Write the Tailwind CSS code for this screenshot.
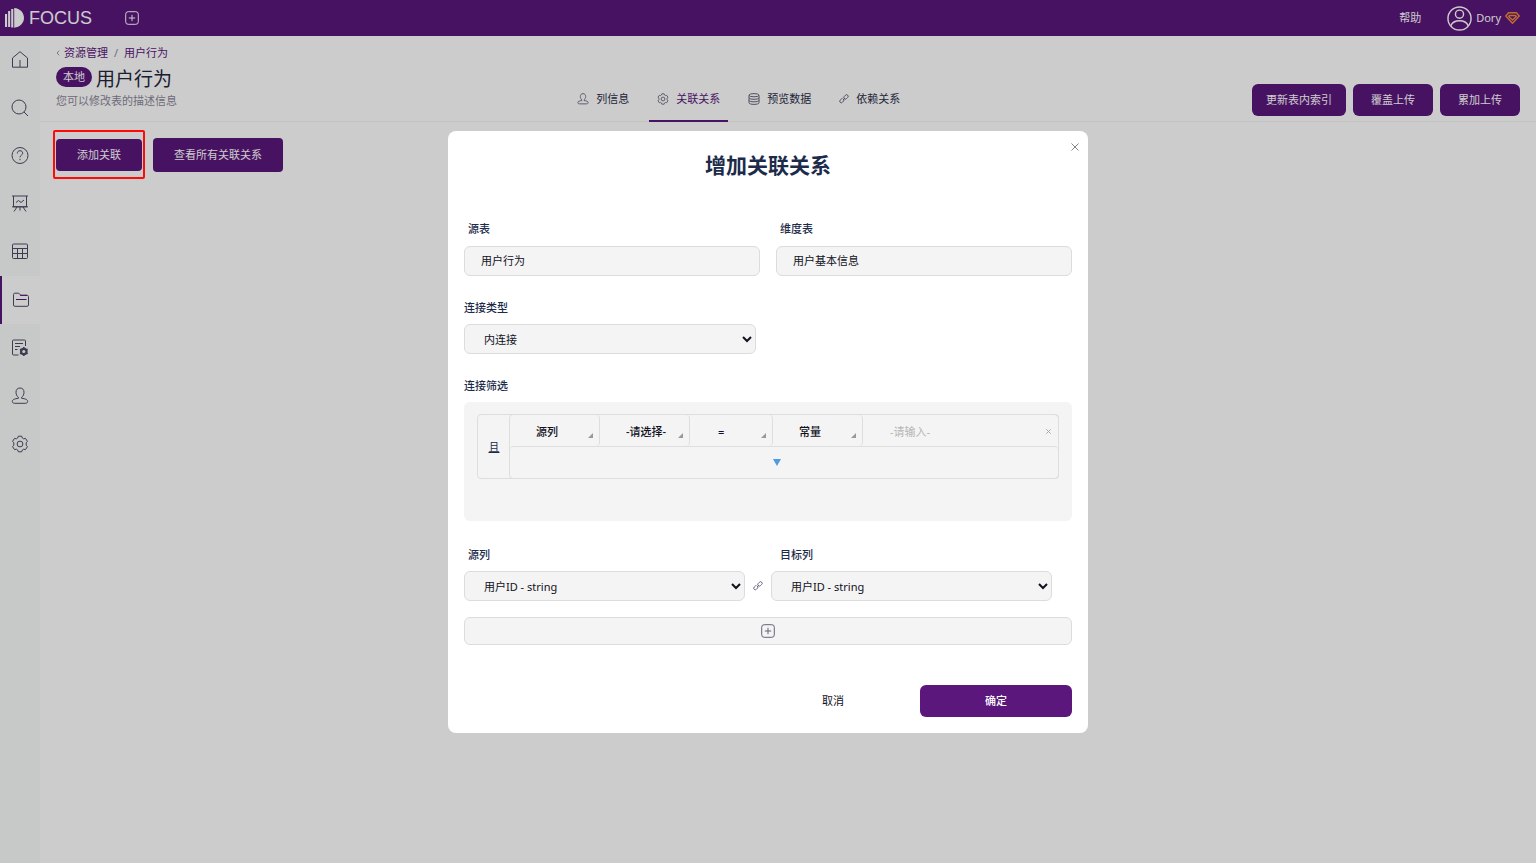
<!DOCTYPE html>
<html lang="zh-CN">
<head>
<meta charset="utf-8">
<meta name="viewport" content="width=device-width, initial-scale=1">
<title>FOCUS - 用户行为</title>
<script src="https://cdn.jsdelivr.net/npm/@tailwindcss/browser@4"></script>
</head>
<body class="flex min-h-screen flex-col bg-white font-['Noto_Sans','Noto_Sans_CJK_SC',sans-serif] text-[11px] leading-4 text-[#1c2b4a]">

<!-- shared icons -->
<svg class="hidden" aria-hidden="true">
  <symbol id="i-user" viewBox="0 0 18 18"><path d="M9 1c-2.500 0-4 1.700-4 4.200 0 2.300 1 4.300 2.400 5.100v1C3.500 11.700 1.300 12.700 1.300 14.500c0 1.200 1 1.800 2.400 1.800h10.600c1.400 0 2.400-.6 2.400-1.800 0-1.800-2.200-2.800-6.100-3.200v-1c1.400-.8 2.400-2.800 2.400-5.100 0-2.500-1.500-4.200-4-4.200z"/></symbol>
  <symbol id="i-gear" viewBox="0 0 18 18"><circle cx="9" cy="9" r="2.900"/><path d="M7.300 1.200h3.400l.6 1.800 1.300.8 1.900-.4 1.900 2.900-1.200 1.500v2.400l1.200 1.500-1.900 2.900-1.900-.4-1.300.8-.6 1.800H7.300L6.700 15l-1.300-.8-1.900.4-1.900-2.900 1.200-1.500V7.800L1.600 6.300l1.900-2.900 1.900.4L6.700 3z"/></symbol>
  <symbol id="i-link" viewBox="0 0 10 10"><path d="M4.900 4.200a1.500 1.500 0 0 1 .3-1.700L6.500 1.200a1.500 1.500 0 0 1 2.200 2.200L7.400 4.700a1.500 1.500 0 0 1-1.500.4M4.300 4.900a1.500 1.500 0 0 1 .4 2L3.400 8.300a1.500 1.500 0 0 1-2.200-2.200l1.300-1.300a1.500 1.500 0 0 1 .9-.4M4 6l2-2"/></symbol>
  <symbol id="i-plus" viewBox="0 0 14 14"><rect x=".7" y=".7" width="12.600" height="12.600" rx="2.500"/><path d="M7 3.800v6.400M3.800 7h6.400"/></symbol>
</svg>

<header class="flex h-9 items-center bg-[#5b177c] text-white">
  <a href="#" class="flex items-center gap-1 pl-[5px]">
    <svg class="h-5 w-5" viewBox="0 0 20 20" fill="currentColor" aria-hidden="true"><path d="M0 6h2.100v13H0zM3.100 3h2.100v16H3.100zM6.200 1h2.100v18.500H6.200zM9.200 0C15 .4 19 4.600 19 9.800s-4 9.500-9.800 9.900z"/></svg>
    <span class="font-['Liberation_Sans',sans-serif] text-lg">FOCUS</span>
  </a>
  <button aria-label="新建" class="ml-[33px]"><svg class="h-3.5 w-3.5" fill="none" stroke="currentColor"><use href="#i-plus"/></svg></button>
  <a href="#" class="ml-auto">帮助</a>
  <a href="#" class="mr-4 ml-[26px] flex items-center gap-1">
    <svg class="h-[25px] w-[25px]" viewBox="0 0 26 26" fill="none" stroke="currentColor" stroke-width="1.500" aria-hidden="true"><circle cx="13" cy="13" r="12"/><circle cx="13" cy="8.500" r="4.200"/><path d="M4 20.500c1.500-3.800 5-5.200 9-5.200s7.500 1.400 9 5.200"/></svg>
    Dory
    <svg class="h-3 w-[15px]" viewBox="0 0 15 12" fill="none" stroke="#f08a3c" stroke-width="1.400" stroke-linejoin="round" aria-hidden="true"><path d="M3.500.8h8L14.200 4 7.500 11.200.8 4z"/><path d="M4.500 3.500h6l.8 1L7.500 8 3.700 4.500z"/></svg>
  </a>
</header>

<div class="flex flex-1">
  <nav class="w-10 shrink-0 bg-[#f9fbfa] text-[#4c4c66]" aria-label="主导航">
    <a href="#" aria-label="首页" class="flex h-12 items-center justify-center"><svg class="h-[18px] w-[18px]" viewBox="0 0 18 18" fill="none" stroke="currentColor"><path d="M1.500 7 9 .7 16.500 7v9.200h-15zM9 9v7"/></svg></a>
    <a href="#" aria-label="搜索" class="flex h-12 items-center justify-center"><svg class="h-[18px] w-[18px]" viewBox="0 0 18 18" fill="none" stroke="currentColor"><circle cx="8" cy="8" r="7"/><path d="m13 13 4 4"/></svg></a>
    <a href="#" aria-label="帮助" class="flex h-12 items-center justify-center"><svg class="h-[18px] w-[18px]" viewBox="0 0 18 18" fill="none" stroke="currentColor"><circle cx="9" cy="8.500" r="8"/><path d="M6.300 6.500c0-1.700 1.100-2.800 2.700-2.800s2.700 1 2.700 2.500c0 1.900-2.700 2-2.700 4.100M9 11.800v1.400"/></svg></a>
    <a href="#" aria-label="看板" class="flex h-12 items-center justify-center"><svg class="h-[18px] w-[18px]" viewBox="0 0 18 18" fill="none" stroke="currentColor"><path d="M1 1h16M2.500 1v10.800h13V1M1 11.800h16M6 12l-3 4.500M12 12l3 4.500M9 12v3.500M5 7.500l2.500-2 2.500 2L13 5"/></svg></a>
    <a href="#" aria-label="表格" class="flex h-12 items-center justify-center"><svg class="h-[18px] w-[18px]" viewBox="0 0 18 18" fill="none" stroke="currentColor"><rect x="1.500" y="1" width="15" height="14.500" rx="1"/><path d="M1.500 5.500h15M1.500 10.500h15M6.500 5.500v10M11.500 5.500v10"/></svg></a>
    <a href="#" aria-label="资源管理" aria-current="page" class="flex h-12 items-center justify-center border-l-2 border-[#5b177c] bg-white"><svg class="h-[18px] w-[18px]" viewBox="0 0 18 18" fill="none" stroke="currentColor"><path d="M1.500 14V3.500c0-.8.5-1.300 1.300-1.300h4l2 2.100h6.400c.8 0 1.300.5 1.300 1.300V14c0 .8-.5 1.300-1.300 1.300H2.800c-.8 0-1.300-.5-1.300-1.300z"/><path d="M4 8.500h10.500M8 4.300h7" stroke="#5b177c"/></svg></a>
    <a href="#" aria-label="任务设置" class="flex h-12 items-center justify-center"><svg class="h-[18px] w-[18px]" viewBox="0 0 18 18" fill="none" stroke="currentColor"><path d="M14.500 7V2c0-.6-.4-1-1-1h-11c-.6 0-1 .4-1 1v13c0 .6.400 1 1 1h5M4 4.500h8M4 7.500h5M4 10.500h2.500"/><circle cx="12.800" cy="12.500" r="2.700" stroke-width="2.200"/><path d="M12.800 8.100v1.800M12.800 15.100v1.800M9 10.300l1.600.9M15 13.800l1.600.9M9 14.700l1.600-.9M15 11.200l1.600-.9" stroke-width="1.600"/></svg></a>
    <a href="#" aria-label="用户" class="flex h-12 items-center justify-center"><svg class="h-[18px] w-[18px]" fill="none" stroke="currentColor"><use href="#i-user"/></svg></a>
    <a href="#" aria-label="设置" class="flex h-12 items-center justify-center"><svg class="h-[18px] w-[18px]" fill="none" stroke="currentColor" stroke-linejoin="round"><use href="#i-gear"/></svg></a>
  </nav>

  <main class="min-w-0 flex-1">
    <div class="grid grid-cols-[26fr_auto_31fr] items-end border-b border-[#f3f3f3] px-4">
      <div class="pt-[9px] pb-3">
        <nav class="flex items-center text-[#5b177c]" aria-label="面包屑">
          <svg class="mr-1 h-1.5 w-1" viewBox="0 0 4 8" fill="none" stroke="#77778c" aria-hidden="true"><path d="M3.500 1 .8 4l2.700 3"/></svg>
          <a href="#">资源管理</a><span class="px-1.5 text-[#8a8a9a]">/</span><a href="#">用户行为</a>
        </nav>
        <div class="mt-1 flex h-7 items-center gap-1">
          <span class="mb-1 rounded-full bg-[#5b177c] px-[7px] py-0.5 text-white">本地</span>
          <h1 class="text-[19px] text-[#22263c]">用户行为</h1>
        </div>
        <p class="text-[#8b8798]">您可以修改表的描述信息</p>
      </div>
      <div class="-mb-px flex gap-3 text-[#2b2f4a]" role="tablist">
        <button role="tab" class="flex items-center gap-[7px] border-b-2 border-transparent px-2 pb-[13px]"><svg class="h-3 w-3 text-[#77778c]" fill="none" stroke="currentColor" stroke-width="1.500"><use href="#i-user"/></svg>列信息</button>
        <button role="tab" aria-selected="true" class="flex items-center gap-[7px] border-b-2 border-[#5b177c] px-2 pb-[13px] text-[#5b177c]"><svg class="h-3 w-3 text-[#77778c]" fill="none" stroke="currentColor" stroke-width="1.500" stroke-linejoin="round"><use href="#i-gear"/></svg>关联关系</button>
        <button role="tab" class="flex items-center gap-[7px] border-b-2 border-transparent px-2 pb-[13px]"><svg class="h-3 w-3 text-[#66667c]" viewBox="0 0 12 12" fill="none" stroke="currentColor"><ellipse cx="6" cy="2.200" rx="5" ry="1.600"/><path d="M1 2.200v7.600c0 .9 2.200 1.600 5 1.600s5-.7 5-1.600V2.200M1 4.800c0 .9 2.200 1.500 5 1.500s5-.6 5-1.500M1 7.300c0 .9 2.200 1.500 5 1.500s5-.6 5-1.500"/></svg>预览数据</button>
        <button role="tab" class="flex items-center gap-[7px] border-b-2 border-transparent px-2 pb-[13px]"><svg class="h-2.5 w-2.5 text-[#66667c]" fill="none" stroke="currentColor"><use href="#i-link"/></svg>依赖关系</button>
      </div>
      <div class="flex justify-end gap-[7px] pb-[5px] text-white">
        <button class="h-8 min-w-20 rounded-md bg-[#5b177c] px-3.5">更新表内索引</button>
        <button class="h-8 min-w-20 rounded-md bg-[#5b177c] px-3.5">覆盖上传</button>
        <button class="h-8 min-w-20 rounded-md bg-[#5b177c] px-3.5">累加上传</button>
      </div>
    </div>
    <div class="flex items-center gap-[11px] px-4 pt-4 text-white">
      <div class="relative">
        <button class="block h-8 rounded bg-[#5b177c] px-[21px]">添加关联</button>
        <span class="pointer-events-none absolute -inset-x-[3px] -top-[9px] -bottom-2 z-30 rounded-xs border-2 border-[#ff0a0a]"></span>
      </div>
      <button class="h-[34px] rounded bg-[#5b177c] px-[21px]">查看所有关联关系</button>
    </div>
  </main>
</div>

<div class="fixed inset-0 z-20 flex items-center justify-center bg-black/20 pt-px">
  <section role="dialog" aria-modal="true" aria-labelledby="dlg-title" class="relative w-full max-w-[640px] rounded-lg bg-white px-4 pt-5 pb-4">
    <button aria-label="关闭" class="absolute top-3 right-[9px] text-[#858585]"><svg class="h-2 w-2" viewBox="0 0 8 8" fill="none" stroke="currentColor"><path d="m.5.500 7 7M7.500.500l-7 7"/></svg></button>
    <h2 id="dlg-title" class="text-center text-[21px] leading-7 font-bold">增加关联关系</h2>

    <div class="mt-[42px] grid grid-cols-2 gap-4">
      <div>
        <label for="src-table" class="mb-[9px] block pl-1 font-medium">源表</label>
        <input id="src-table" value="用户行为" class="block h-[30px] w-full rounded-md border border-[#dcdcdc] bg-[#f4f4f4] px-4 pb-0.5 text-[#111122]">
      </div>
      <div>
        <label for="dim-table" class="mb-[9px] block pl-1 font-medium">维度表</label>
        <input id="dim-table" value="用户基本信息" class="block h-[30px] w-full rounded-md border border-[#dcdcdc] bg-[#f4f4f4] px-4 pb-0.5 text-[#111122]">
      </div>
    </div>

    <label for="join-type" class="mt-6 mb-2 block font-medium">连接类型</label>
    <select id="join-type" class="block h-[30px] w-[292px] rounded-md border border-[#dcdcdc] bg-[#f4f4f4] pl-[15px] text-[#111122]"><option>内连接</option></select>

    <h3 class="mt-6 mb-2 font-medium">连接筛选</h3>
    <div class="rounded-md bg-[#f4f4f4] p-3 pb-[42px]">
      <div class="mx-px flex rounded border border-[#dedede]">
        <button class="w-8 shrink-0 underline">且</button>
        <div class="-m-px min-w-0 flex-1 rounded border border-[#dedede]">
          <div class="flex h-[31px] text-[#111122]">
            <div class="relative w-[90px] shrink-0 rounded border-r border-[#dedede]">
              <select aria-label="列来源" class="h-full w-full appearance-none pt-0.5 pl-[26px] font-medium"><option>源列</option></select>
              <svg class="pointer-events-none absolute right-1.5 bottom-2 h-[5px] w-[5px]" viewBox="0 0 4 4" fill="#999"><path d="M4 0v4H0z"/></svg>
            </div>
            <div class="relative w-[90px] shrink-0 rounded border-r border-[#dedede]">
              <select aria-label="选择列" class="h-full w-full appearance-none pt-0.5 pl-[26px] font-medium"><option>-请选择-</option></select>
              <svg class="pointer-events-none absolute right-1.5 bottom-2 h-[5px] w-[5px]" viewBox="0 0 4 4" fill="#999"><path d="M4 0v4H0z"/></svg>
            </div>
            <div class="relative w-[83px] shrink-0 rounded border-r border-[#dedede]">
              <select aria-label="运算符" class="h-full w-full appearance-none pt-0.5 pl-7 font-medium"><option>=</option></select>
              <svg class="pointer-events-none absolute right-1.5 bottom-2 h-[5px] w-[5px]" viewBox="0 0 4 4" fill="#999"><path d="M4 0v4H0z"/></svg>
            </div>
            <div class="relative w-[90px] shrink-0 rounded border-r border-[#dedede]">
              <select aria-label="值类型" class="h-full w-full appearance-none pt-0.5 pl-[26px] font-medium"><option>常量</option></select>
              <svg class="pointer-events-none absolute right-1.5 bottom-2 h-[5px] w-[5px]" viewBox="0 0 4 4" fill="#999"><path d="M4 0v4H0z"/></svg>
            </div>
            <input aria-label="值" placeholder="-请输入-" class="min-w-0 flex-1 pt-0.5 pl-[27px] placeholder:text-[#b5b5b5]">
            <button aria-label="删除条件" class="px-[7px] pt-0.5 text-[#a8a8a8]"><svg class="h-[5px] w-[5px]" viewBox="0 0 5 5" fill="none" stroke="currentColor"><path d="m.3.300 4.400 4.400M4.700.300.300 4.700"/></svg></button>
          </div>
          <button aria-label="添加条件" class="flex h-8 w-full items-center justify-center rounded-t border-t border-[#dedede] pr-3.5"><svg class="h-[7px] w-2" viewBox="0 0 8 7" fill="#4a9de0"><path d="M0 0h8L4 7z"/></svg></button>
        </div>
      </div>
    </div>

    <div class="mt-[26px] grid grid-cols-2 gap-4 font-medium">
      <label for="src-col" class="pl-1">源列</label>
      <label for="dst-col" class="pl-1">目标列</label>
    </div>
    <div class="mt-2 flex items-center pr-5">
      <select id="src-col" class="h-[30px] min-w-0 flex-1 rounded-md border border-[#dcdcdc] bg-[#f4f4f4] pl-[15px] text-[#111122]"><option>用户ID - string</option></select>
      <svg class="mx-2 h-2.5 w-2.5 text-[#66667c]" fill="none" stroke="currentColor" aria-hidden="true"><use href="#i-link"/></svg>
      <select id="dst-col" class="h-[30px] min-w-0 flex-1 rounded-md border border-[#dcdcdc] bg-[#f4f4f4] pl-[15px] text-[#111122]"><option>用户ID - string</option></select>
    </div>
    <button aria-label="添加列" class="mt-4 flex h-7 w-full items-center justify-center rounded-md border border-[#dcdcdc] bg-[#f4f4f4] text-[#66617c]"><svg class="h-3.5 w-3.5" fill="none" stroke="currentColor"><use href="#i-plus"/></svg></button>

    <div class="mt-10 flex justify-end gap-[11px]">
      <button class="h-8 w-[152px] rounded-md text-[#111122]">取消</button>
      <button class="h-8 w-[152px] rounded-md bg-[#5b177c] font-medium text-white">确定</button>
    </div>
  </section>
</div>
</body>
</html>
